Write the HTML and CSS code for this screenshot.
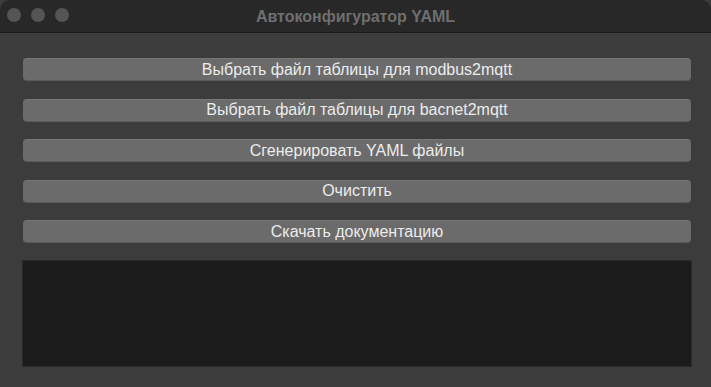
FILE: index.html
```html
<!DOCTYPE html>
<html lang="ru">
<head>
<meta charset="utf-8">
<title>Автоконфигуратор YAML</title>
<link rel="stylesheet" href="styles.css">
</head>
<body>
<div class="window">
  <div class="titlebar">
    <div class="lights">
      <span class="light"></span>
      <span class="light"></span>
      <span class="light"></span>
    </div>
    <div class="title">Автоконфигуратор YAML</div>
  </div>
  <div class="content">
    <button class="btn">Выбрать файл таблицы для modbus2mqtt</button>
    <button class="btn">Выбрать файл таблицы для bacnet2mqtt</button>
    <button class="btn">Сгенерировать YAML файлы</button>
    <button class="btn">Очистить</button>
    <button class="btn">Скачать документацию</button>
    <div class="log"></div>
  </div>
</div>
</body>
</html>
```

FILE: styles.css
```css
html, body {
  margin: 0;
  padding: 0;
  background: #3b3b3b;
}
.window {
  width: 711px;
  height: 387px;
  background: #3c3c3c;
  border-radius: 10px 10px 0 0;
  overflow: hidden;
  display: flex;
  flex-direction: column;
  font-family: "Liberation Sans", Arial, sans-serif;
}
.titlebar {
  height: 32px;
  background: #282828;
  border-bottom: 1px solid #1c1c1c;
  position: relative;
  display: flex;
  align-items: center;
  justify-content: center;
  flex-shrink: 0;
}
.lights {
  position: absolute;
  left: 7px;
  top: 8px;
  display: flex;
  gap: 10px;
}
.light {
  width: 14px;
  height: 14px;
  border-radius: 50%;
  background: #555555;
}
.title {
  color: #6f6f6f;
  font-weight: bold;
  font-size: 16px;
  margin-top: 1px;
}
.content {
  padding: 25px 20px 0 23px;
  display: flex;
  flex-direction: column;
  gap: 17.5px;
}
.btn {
  width: 668px;
  height: 23px;
  margin: 0;
  padding: 0;
  border: none;
  border-top: 1px solid #767676;
  border-bottom: 1px solid #5a5a5a;
  border-radius: 4px;
  background: #6b6b6b;
  color: #ececec;
  font-family: "Liberation Sans", Arial, sans-serif;
  font-size: 16px;
  line-height: 20px;
  text-align: center;
}
.log {
  width: 668px;
  height: 105px;
  margin-left: -1px;
  margin-top: -0.5px;
  background: #1b1b1b;
  border: 1px solid #2a2a2a;
}
```
